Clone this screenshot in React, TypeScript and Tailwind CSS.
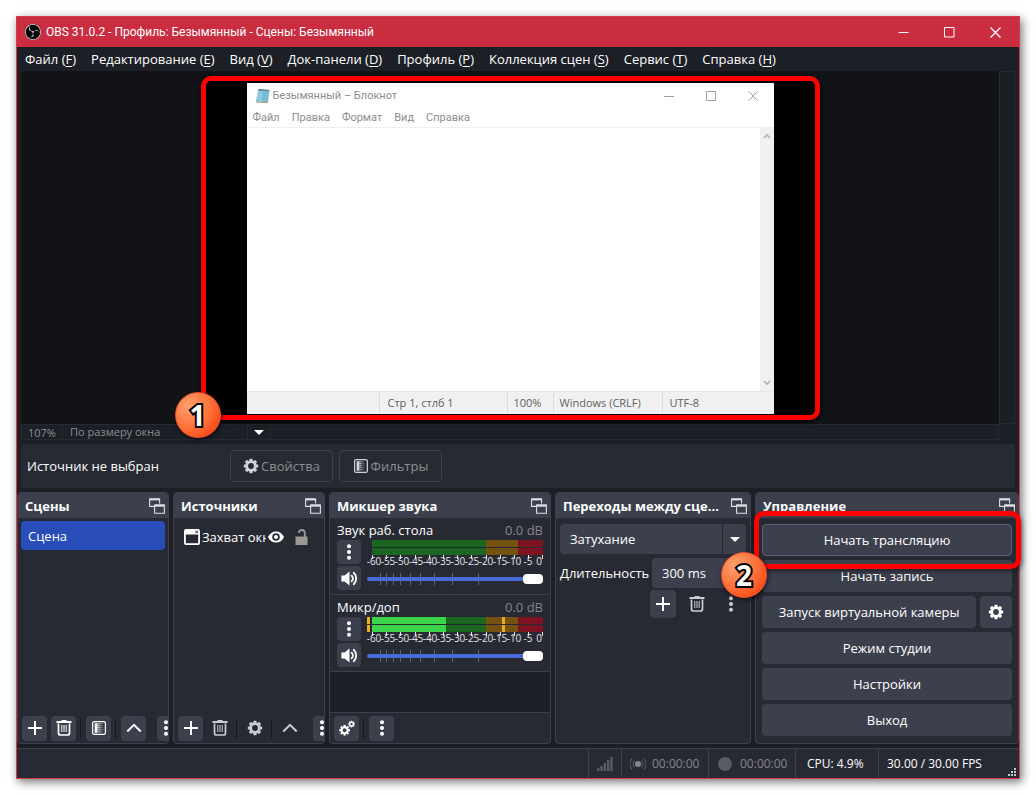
import React from 'react';
import { SiObsstudio } from 'react-icons/si';

interface IconProps {
  className?: string;
}

interface DockProps {
  title: string;
  children: React.ReactNode;
}

const MENU = [
  ['Файл', 'F'],
  ['Редактирование', 'E'],
  ['Вид', 'V'],
  ['Док-панели', 'D'],
  ['Профиль', 'P'],
  ['Коллекция сцен', 'S'],
  ['Сервис', 'T'],
  ['Справка', 'H'],
];

const TEETH = [0, 45, 90, 135, 180, 225, 270, 315];
const DB_MARKS = [-60, -55, -50, -45, -40, -35, -30, -25, -20, -15, -10, -5, 0];
const FADER_MARKS = [13, 19, 26, 33, 43, 53, 67, 85, 111];

const GearIcon = ({ className = 'size-4' }: IconProps) => (
  <svg className={className} viewBox="0 0 16 16" fill="currentColor">
    <circle cx="8" cy="8" r="4.3" fill="none" stroke="currentColor" strokeWidth="2.8" />
    {TEETH.map((angle) => (
      <rect key={angle} x="6.4" y="0.8" width="3.2" height="2.6" rx="0.6" transform={`rotate(${angle} 8 8)`} />
    ))}
  </svg>
);

const GearsIcon = () => (
  <svg className="size-4" viewBox="0 0 16 16" fill="currentColor">
    <g transform="translate(0 4.6) scale(0.7)">
      <circle cx="8" cy="8" r="4.3" fill="none" stroke="currentColor" strokeWidth="3" />
      {TEETH.map((angle) => (
        <rect key={angle} x="6.4" y="0.4" width="3.2" height="3" transform={`rotate(${angle} 8 8)`} />
      ))}
    </g>
    <g transform="translate(9 0.6) scale(0.44)">
      <circle cx="8" cy="8" r="4.3" fill="none" stroke="currentColor" strokeWidth="3" />
      {TEETH.map((angle) => (
        <rect key={angle} x="6.4" y="0.4" width="3.2" height="3" transform={`rotate(${angle} 8 8)`} />
      ))}
    </g>
  </svg>
);

const PlusIcon = () => (
  <svg className="size-4" viewBox="0 0 16 16" stroke="currentColor" strokeWidth="2">
    <path d="M8 1v14M1 8h14" />
  </svg>
);

const TrashIcon = () => (
  <svg className="size-4" viewBox="0 0 16 16" fill="none" stroke="currentColor">
    <path d="M0.5 2h15" strokeWidth="2" />
    <path d="M5.5 0.8h5" strokeWidth="1.6" />
    <path d="M2.5 3.5v9.5a2 2 0 0 0 2 2h7a2 2 0 0 0 2-2v-9.5" strokeWidth="1.7" />
    <path d="M5.8 5v7M8 5v7M10.2 5v7" strokeWidth="1" />
  </svg>
);

const FilterIcon = () => (
  <svg className="size-4" viewBox="0 0 16 16" fill="none" stroke="currentColor">
    <rect x="1.6" y="1.6" width="12.8" height="12.8" rx="1.6" strokeWidth="1.2" />
    <path d="M3.6 3.2h2.6v9.6H3.6z" fill="currentColor" stroke="none" />
    <path d="M7 3.2v9.6" strokeWidth="1.4" strokeDasharray="1.2 0.6" />
    <path d="M8.8 3.2v9.6" strokeWidth="1.4" strokeDasharray="1 1" opacity="0.8" />
    <path d="M10.6 3.2v9.6" strokeWidth="1.4" strokeDasharray="1 1" opacity="0.4" />
  </svg>
);

const ChevronIcon = () => (
  <svg className="size-4" viewBox="0 0 16 16" fill="none" stroke="currentColor" strokeWidth="2">
    <path d="M1.3 11.5 8 4.8l6.7 6.7" />
  </svg>
);

const DotsIcon = () => (
  <svg className="size-4 shrink-0" viewBox="0 0 16 16" fill="currentColor">
    <circle cx="8" cy="2.2" r="2" />
    <circle cx="8" cy="8" r="2" />
    <circle cx="8" cy="13.8" r="2" />
  </svg>
);

const ArrowDownIcon = ({ className = '' }: IconProps) => (
  <svg className={`h-[5px] w-[10px] ${className}`} viewBox="0 0 10 5" fill="#fff">
    <path d="M0 0h10L5 5z" />
  </svg>
);

const FloatIcon = () => (
  <svg className="size-4" viewBox="0 0 16 16" fill="none" stroke="currentColor" strokeWidth="1.1">
    <path d="M5 8.4H0.6V1h10v4.5" />
    <path d="M0.5 1.4h10.2" strokeWidth="2" />
    <path d="M5.6 7h9.8v8.3H5.6z" />
    <path d="M5.5 7.6h10" strokeWidth="2.2" />
  </svg>
);

const SpeakerIcon = () => (
  <svg className="size-[17px]" viewBox="0 0 16 16" fill="none" stroke="currentColor" strokeWidth="1.7">
    <path d="M0.4 5.2h3L8 1.4v13.2L3.4 10.8h-3z" fill="currentColor" stroke="none" />
    <path d="M10 5.3a4 4 0 0 1 0 5.400M12 2.600a7.600 7.600 0 0 1 0 10.800" strokeLinecap="round" />
  </svg>
);

const ToolButton: React.FC<{ label: string; plain?: boolean; children: React.ReactNode }> = ({ label, plain, children }) => (
  <button
    aria-label={label}
    className={`flex size-[25px] shrink-0 items-center justify-center rounded ${
      plain ? 'text-[#c9ccd6]' : 'bg-[#3c404d] text-white'
    }`}
  >
    {children}
  </button>
);

const Separator = () => <span className="h-[19px] w-[2px] shrink-0 border-l border-[#16181d]" />;

const Badge: React.FC<{ className: string; children: React.ReactNode }> = ({ className, children }) => (
  <span
    className={`absolute z-20 flex size-[46px] items-center justify-center rounded-full border border-[#e8502a] bg-radial-[at_30%_30%] from-[#ffa070] via-[#ff7038] to-[#fb3000] text-[28px] leading-none font-bold text-white shadow-[1px_2px_4px_rgba(0,0,0,0.6)] [-webkit-text-stroke:4px_black] [paint-order:stroke_fill] ${className}`}
  >
    {children}
  </span>
);

const Dock: React.FC<DockProps> = ({ title, children }) => (
  <section className="flex min-w-0 flex-col rounded border border-[#3c404d] bg-[#272a33]">
    <header className="flex h-[25px] items-center justify-between gap-2 rounded-t-sm bg-[#3c404d] pr-[3px] pl-[7px]">
      <h2 className="truncate font-bold">{title}</h2>
      <button aria-label={`Открепить: ${title}`} className="shrink-0 text-[#dddfe5]">
        <FloatIcon />
      </button>
    </header>
    {children}
  </section>
);

const Meter: React.FC<{ level?: number }> = ({ level = 0 }) => (
  <svg className="w-full overflow-visible" viewBox="0 0 176 30">
    {[0, 8].map((y) => (
      <g key={y}>
        <rect x="5" y={y} width="114" height="7" fill="#1b6620" />
        <rect x="119" y={y} width="32" height="7" fill="#75520f" />
        <rect x="151" y={y} width="25" height="7" fill="#7d1220" />
        {level > 0 && (
          <>
            <rect x="0" y={y} width="3" height="7" fill="#e8ad20" />
            <rect x="5" y={y} width={level} height="7" fill="#3bd44a" />
            <rect x="135" y={y} width="3" height="7" fill="#e8ad20" />
          </>
        )}
      </g>
    ))}
    {DB_MARKS.map((db, i) => (
      <g key={db} fill="#e4e5ea">
        <rect x={Math.round(5 + i * 14.2)} y="15" width="1" height="4" />
        <text x={i === 12 ? 172 : 7 + i * 14} y="25" fontSize="10" textAnchor="middle">
          {db}
        </text>
      </g>
    ))}
  </svg>
);

const Channel: React.FC<{ name: string; level?: number }> = ({ name, level }) => (
  <div className="border-b border-[#3c404d] px-[7px] pt-[2px] pb-1">
    <div className="flex h-5 items-center justify-between">
      <span>{name}</span>
      <span className="text-[#85858b]">0.0 dB</span>
    </div>
    <div className="flex gap-[6px]">
      <div className="flex flex-col gap-[2px]">
        <button aria-label="Меню канала" className="flex size-6 items-center justify-center rounded bg-[#3c404d]">
          <DotsIcon />
        </button>
        <button aria-label="Заглушить" className="flex size-6 items-center justify-center rounded bg-[#3c404d]">
          <SpeakerIcon />
        </button>
      </div>
      <div className="min-w-0 flex-1">
        <Meter level={level} />
        <div className="relative mt-[3px] flex h-3 items-center">
          <svg className="absolute inset-0 h-3 w-full" viewBox="0 0 176 12">
            {FADER_MARKS.map((x) => (
              <path key={x} d={`M${x + 0.5} 0v12`} stroke="#5b6273" />
            ))}
          </svg>
          <input
            type="range"
            aria-label={name}
            defaultValue={100}
            className="relative h-1 w-full appearance-none rounded-full bg-[#476bd7] [&::-webkit-slider-thumb]:h-[10px] [&::-webkit-slider-thumb]:w-5 [&::-webkit-slider-thumb]:appearance-none [&::-webkit-slider-thumb]:rounded [&::-webkit-slider-thumb]:bg-white"
          />
        </div>
      </div>
    </div>
  </div>
);

const Notepad = () => (
  <div className="flex h-full flex-col bg-white text-[11px] text-[#8d8d8d]">
    <div className="flex h-[25px] items-center pr-4 pl-2 font-['Roboto','Open_Sans',sans-serif]">
      <svg className="size-4" viewBox="0 0 16 16">
        <path d="M3.500 1 14.500 2 13 14.500 0.800 13z" fill="#8dcbe0" />
        <path d="M3.500 1 14.500 2l-.3 1.500-11-1z" fill="#4f7f8c" />
        <path d="M8 2.500 14 3l-1.300 11L7 13.400z" fill="#79b9d2" />
        <path d="m.8 13 12 1.300.2 1L1.500 14.500z" fill="#b09a80" />
      </svg>
      <span className="ml-[2px]">Безымянный – Блокнот</span>
      <div className="ml-auto flex gap-8">
        <svg className="size-[10px]" viewBox="0 0 10 10" stroke="#a0a0a0"><path d="M0 5.5h10" /></svg>
        <svg className="size-[10px]" viewBox="0 0 10 10" stroke="#a0a0a0" fill="none"><path d="M.5.5h9v9h-9z" /></svg>
        <svg className="size-[10px]" viewBox="0 0 10 10" stroke="#a0a0a0"><path d="m.5.5 9 9m0-9-9 9" /></svg>
      </div>
    </div>
    <div className="flex h-5 items-center gap-3 border-b border-[#efefef] px-[6px] font-['Roboto','Open_Sans',sans-serif]">
      <span>Файл</span>
      <span>Правка</span>
      <span>Формат</span>
      <span>Вид</span>
      <span>Справка</span>
    </div>
    <div className="flex flex-1 justify-end">
      <div className="flex w-[14px] flex-col items-center justify-between bg-[#f0f0f0] py-1">
        <svg className="size-2" viewBox="0 0 8 8" fill="none" stroke="#b0b0b0" strokeWidth="1.6"><path d="m1 6 3-3 3 3" /></svg>
        <svg className="size-2" viewBox="0 0 8 8" fill="none" stroke="#b0b0b0" strokeWidth="1.6"><path d="m1 2 3 3 3-3" /></svg>
      </div>
    </div>
    <div className="flex h-[23px] items-stretch justify-end border-t border-[#e6e6e6] bg-[#f0f0f0] leading-[22px] text-[#5f5f5f]">
      <span className="w-32 border-l border-[#dcdcdc] pl-2">Стр 1, стлб 1</span>
      <span className="w-[46px] border-l border-[#dcdcdc] pl-[6px]">100%</span>
      <span className="w-[109px] border-l border-[#dcdcdc] pl-[6px]">Windows (CRLF)</span>
      <span className="w-28 border-l border-[#dcdcdc] pl-[7px]">UTF-8</span>
    </div>
  </div>
);

const Preview = () => (
  <div className="flex flex-1 flex-col pr-1 pl-1">
    <div className="flex flex-1">
      <div className="flex flex-1 justify-center bg-[#121317] pt-[5px] pb-1">
        <div className="relative z-10 aspect-[619/344] rounded-[10px] border-5 border-[#fe0000] bg-black px-[41px] pt-[2px] pb-px shadow-[1px_2px_5px_rgba(0,0,0,0.8)]">
          <Notepad />
          <Badge className="-bottom-[23px] -left-[31px]">1</Badge>
        </div>
      </div>
      <div className="w-4 border border-[#272a33] bg-[#1c1e25]" />
    </div>
    <div className="mr-4 flex h-4 border border-[#272a33] text-[11px] leading-4 text-[#8d8d90]">
      <span className="w-[41px] border-r border-[#272a33] pl-[6px]">107%</span>
      <button className="flex w-52 items-center justify-between text-left">
        <span className="pl-[7px]">По размеру окна</span>
        <span className="flex h-full w-6 items-center justify-center border-x border-[#272a33]">
          <ArrowDownIcon />
        </span>
      </button>
    </div>
  </div>
);

const TitleBar = () => (
  <header className="flex h-[30px] shrink-0 items-center bg-[#cb2d40] px-2 text-xs">
    <span className="flex size-4 items-center justify-center rounded-full bg-black">
      <SiObsstudio className="size-4 text-[#e4e4e4]" />
    </span>
    <h1 className="ml-[5px] font-['Roboto','Open_Sans',sans-serif]">OBS 31.0.2 - Профиль: Безымянный - Сцены: Безымянный</h1>
    <div className="ml-auto flex gap-[35px] pr-[10px]">
      <button aria-label="Свернуть">
        <svg className="size-[11px]" viewBox="0 0 11 11" stroke="#fff"><path d="M.5 5.5h10" /></svg>
      </button>
      <button aria-label="Развернуть">
        <svg className="size-[11px]" viewBox="0 0 11 11" stroke="#fff" fill="none"><path d="M.5.5h9.5V10H.5z" /></svg>
      </button>
      <button aria-label="Закрыть">
        <svg className="size-[11px]" viewBox="0 0 11 11" stroke="#fff" strokeWidth="1.3"><path d="m.5.5 10 10m0-10-10 10" /></svg>
      </button>
    </div>
  </header>
);

const StatusBar = () => (
  <footer className="relative mt-1 flex h-[30px] shrink-0 items-stretch justify-end border-t border-[#3c404d] bg-[#272a33] text-xs">
    <div className="flex w-[33px] items-center justify-center border-l border-[#3c404d]">
      <svg className="size-4" viewBox="0 0 16 16" fill="#585b63">
        <path d="M0 12h2.4v3H0zM3.3 10h2.4v5H3.3zM6.6 7h2.4v8H6.6zM9.9 4h2.4v11H9.9zM13.2 1h2.4v14h-2.4z" />
      </svg>
    </div>
    <div className="flex w-[87px] items-center gap-[6px] border-l border-[#3c404d] pl-2 text-[#85858b]">
      <svg className="size-4" viewBox="0 0 16 16" fill="none" stroke="#50535c" strokeWidth="1.2">
        <circle cx="8" cy="8" r="3" fill="#85868c" stroke="none" />
        <path d="M4.5 4.5a5 5 0 0 0 0 7M11.5 4.5a5 5 0 0 1 0 7M2.3 2.3a8 8 0 0 0 0 11.4M13.7 2.3a8 8 0 0 1 0 11.4" />
      </svg>
      00:00:00
    </div>
    <div className="flex w-[87px] items-center gap-2 border-l border-[#3c404d] pl-[9px] text-[#85858b]">
      <span className="size-[14px] rounded-full bg-[#585b63]" />
      00:00:00
    </div>
    <div className="flex w-[83px] items-center border-l border-[#3c404d] pl-[11px]">CPU: 4.9%</div>
    <div className="flex w-[141px] items-center border-l border-[#3c404d] pl-2">30.00 / 30.00 FPS</div>
    <svg className="absolute right-[3px] bottom-[2px] size-2" viewBox="0 0 8 8" fill="#c4c5ca">
      <path d="M6 0h2v2H6zM3 3h2v2H3zM6 3h2v2H6zM0 6h2v2H0zM3 6h2v2H3zM6 6h2v2H6z" />
    </svg>
  </footer>
);

const ControlButton: React.FC<{ className?: string; children: React.ReactNode }> = ({ className = '', children }) => (
  <button className={`h-8 w-full rounded bg-[#3c404d] ${className}`}>{children}</button>
);

const App: React.FC = () => {
  return (
    <div className="flex min-h-screen flex-col bg-white p-4 font-['Open_Sans','Noto_Sans',sans-serif] text-[13px] leading-5 text-white">
      <main className="flex flex-1 flex-col border border-[#d83a4b] bg-[#1d1f26] shadow-[2px_3px_9px_rgba(0,0,0,0.55)]">
        <TitleBar />
        <nav className="flex h-6 shrink-0 items-center gap-[15px] px-2">
          {MENU.map(([label, key]) => (
            <button key={key} className="whitespace-nowrap">
              {label} (<u className="underline-offset-2">{key}</u>)
            </button>
          ))}
        </nav>

        <Preview />

        <div className="mx-1 my-1 flex h-11 shrink-0 items-center rounded bg-[#272a33] pl-[6px]">
          <span className="w-[203px]">Источник не выбран</span>
          <button className="flex h-8 w-[103px] items-center justify-center gap-[2px] rounded border border-[#3c404d] text-[#8d8d90]">
            <GearIcon className="size-4 text-[#d0d2da]" />
            Свойства
          </button>
          <button className="ml-[6px] flex h-8 w-[103px] items-center justify-center gap-[2px] rounded border border-[#3c404d] text-[#8d8d90]">
            <span className="text-[#d0d2da]"><FilterIcon /></span>
            Фильтры
          </button>
        </div>

        <div className="grid h-[252px] shrink-0 grid-cols-[152fr_152fr_222fr_196fr_264fr] gap-1">
          <Dock title="Сцены">
            <ul className="flex-1 p-[3px]">
              <li className="flex h-[29px] items-center rounded bg-[#284cb8] pl-[7px]">Сцена</li>
            </ul>
            <div className="flex h-[30px] items-center gap-1 overflow-hidden pl-1">
              <ToolButton label="Добавить сцену"><PlusIcon /></ToolButton>
              <ToolButton label="Удалить сцену"><TrashIcon /></ToolButton>
              <Separator />
              <ToolButton label="Фильтры сцены"><FilterIcon /></ToolButton>
              <Separator />
              <ToolButton label="Сцену выше"><ChevronIcon /></ToolButton>
              <span className="ml-[7px] flex h-[25px] flex-1 items-center overflow-hidden rounded-l bg-[#3c404d] pl-px"><DotsIcon /></span>
            </div>
          </Dock>

          <Dock title="Источники">
            <ul className="flex-1 p-[3px]">
              <li className="flex h-[31px] items-center pl-[7px]">
                <svg className="size-4 shrink-0" viewBox="0 0 16 16">
                  <rect width="16" height="16" rx="2" fill="#fff" />
                  <path d="M1.8 5.5h12.4v8.7H1.8z" fill="#272a33" />
                  <path d="m11.3 1.6 2.6 2.6m0-2.6-2.6 2.6" stroke="#272a33" />
                </svg>
                <span className="ml-[2px] w-16 overflow-hidden whitespace-nowrap">Захват окна</span>
                <svg className="ml-[2px] size-4 shrink-0" viewBox="0 0 16 16">
                  <path d="M0 8c1.6-3.6 4.6-5.6 8-5.6s6.4 2 8 5.6c-1.6 3.6-4.6 5.6-8 5.6S1.6 11.6 0 8z" fill="#fff" />
                  <circle cx="8" cy="8" r="3.8" fill="#272a33" />
                  <circle cx="8" cy="8" r="2" fill="#fff" />
                </svg>
                <svg className="ml-[10px] size-4 shrink-0" viewBox="0 0 16 16">
                  <path d="M1.5 7.5h12V16h-12z" fill="#9a9994" />
                  <path d="M4.8 4a3 3 0 0 1 6 0V8" fill="none" stroke="#9a9994" strokeWidth="1.8" />
                </svg>
              </li>
            </ul>
            <div className="flex h-[30px] items-center gap-1 overflow-hidden pl-1">
              <ToolButton label="Добавить источник"><PlusIcon /></ToolButton>
              <ToolButton label="Удалить источник" plain><TrashIcon /></ToolButton>
              <Separator />
              <ToolButton label="Свойства источника" plain><GearIcon /></ToolButton>
              <Separator />
              <ToolButton label="Источник выше" plain><ChevronIcon /></ToolButton>
              <span className="ml-[7px] flex h-[25px] flex-1 items-center overflow-hidden rounded-l bg-[#3c404d] pl-px"><DotsIcon /></span>
            </div>
          </Dock>

          <Dock title="Микшер звука">
            <Channel name="Звук раб. стола" />
            <Channel name="Микр/доп" level={74} />
            <div className="flex-1 bg-[#1d1f26]" />
            <div className="flex h-[31px] items-center gap-1 border-t border-[#3c404d] pl-1">
              <ToolButton label="Расширенные свойства аудио"><GearsIcon /></ToolButton>
              <Separator />
              <ToolButton label="Меню микшера"><DotsIcon /></ToolButton>
            </div>
          </Dock>

          <Dock title="Переходы между сценами">
            <div className="flex flex-col gap-1 px-1 pt-[6px]">
              <div className="relative">
                <select aria-label="Переход" className="h-[30px] w-full appearance-none rounded bg-[#3c404d] pl-[10px]">
                  <option>Затухание</option>
                </select>
                <span className="pointer-events-none absolute inset-y-0 right-0 flex w-6 items-center justify-center border-l border-[#272a33]">
                  <ArrowDownIcon />
                </span>
              </div>
              <div className="flex items-center justify-between">
                <label htmlFor="duration">Длительность</label>
                <input id="duration" defaultValue="300 ms" className="h-[30px] w-[94px] rounded bg-[#3c404d] pl-[10px]" />
              </div>
            </div>
            <div className="mt-[2px] flex h-7 items-center justify-end gap-2 pr-[6px]">
              <button aria-label="Добавить переход" className="flex h-7 w-[26px] items-center justify-center rounded bg-[#3c404d]"><PlusIcon /></button>
              <button aria-label="Удалить переход" className="flex w-[26px] justify-center text-[#c9ccd6]"><TrashIcon /></button>
              <button aria-label="Свойства перехода" className="flex w-[26px] justify-center text-[#c9ccd6]"><DotsIcon /></button>
            </div>
          </Dock>

          <Dock title="Управление">
            <div className="flex flex-col gap-1 p-[6px]">
              <div className="relative">
                <ControlButton className="border border-[#5b6273]">Начать трансляцию</ControlButton>
                <span className="pointer-events-none absolute -top-[13px] -right-[9px] -bottom-[13px] -left-2 z-10 rounded-[10px] border-5 border-[#fe0000] shadow-[1px_2px_5px_rgba(0,0,0,0.5)]" />
                <Badge className="top-7 -left-[41px]">2</Badge>
              </div>
              <ControlButton>Начать запись</ControlButton>
              <div className="flex gap-1">
                <ControlButton>Запуск виртуальной камеры</ControlButton>
                <button aria-label="Настройки камеры" className="flex size-8 shrink-0 items-center justify-center rounded bg-[#3c404d]">
                  <GearIcon />
                </button>
              </div>
              <ControlButton>Режим студии</ControlButton>
              <ControlButton>Настройки</ControlButton>
              <ControlButton>Выход</ControlButton>
            </div>
          </Dock>
        </div>

        <StatusBar />
      </main>
    </div>
  );
};

export default App;
